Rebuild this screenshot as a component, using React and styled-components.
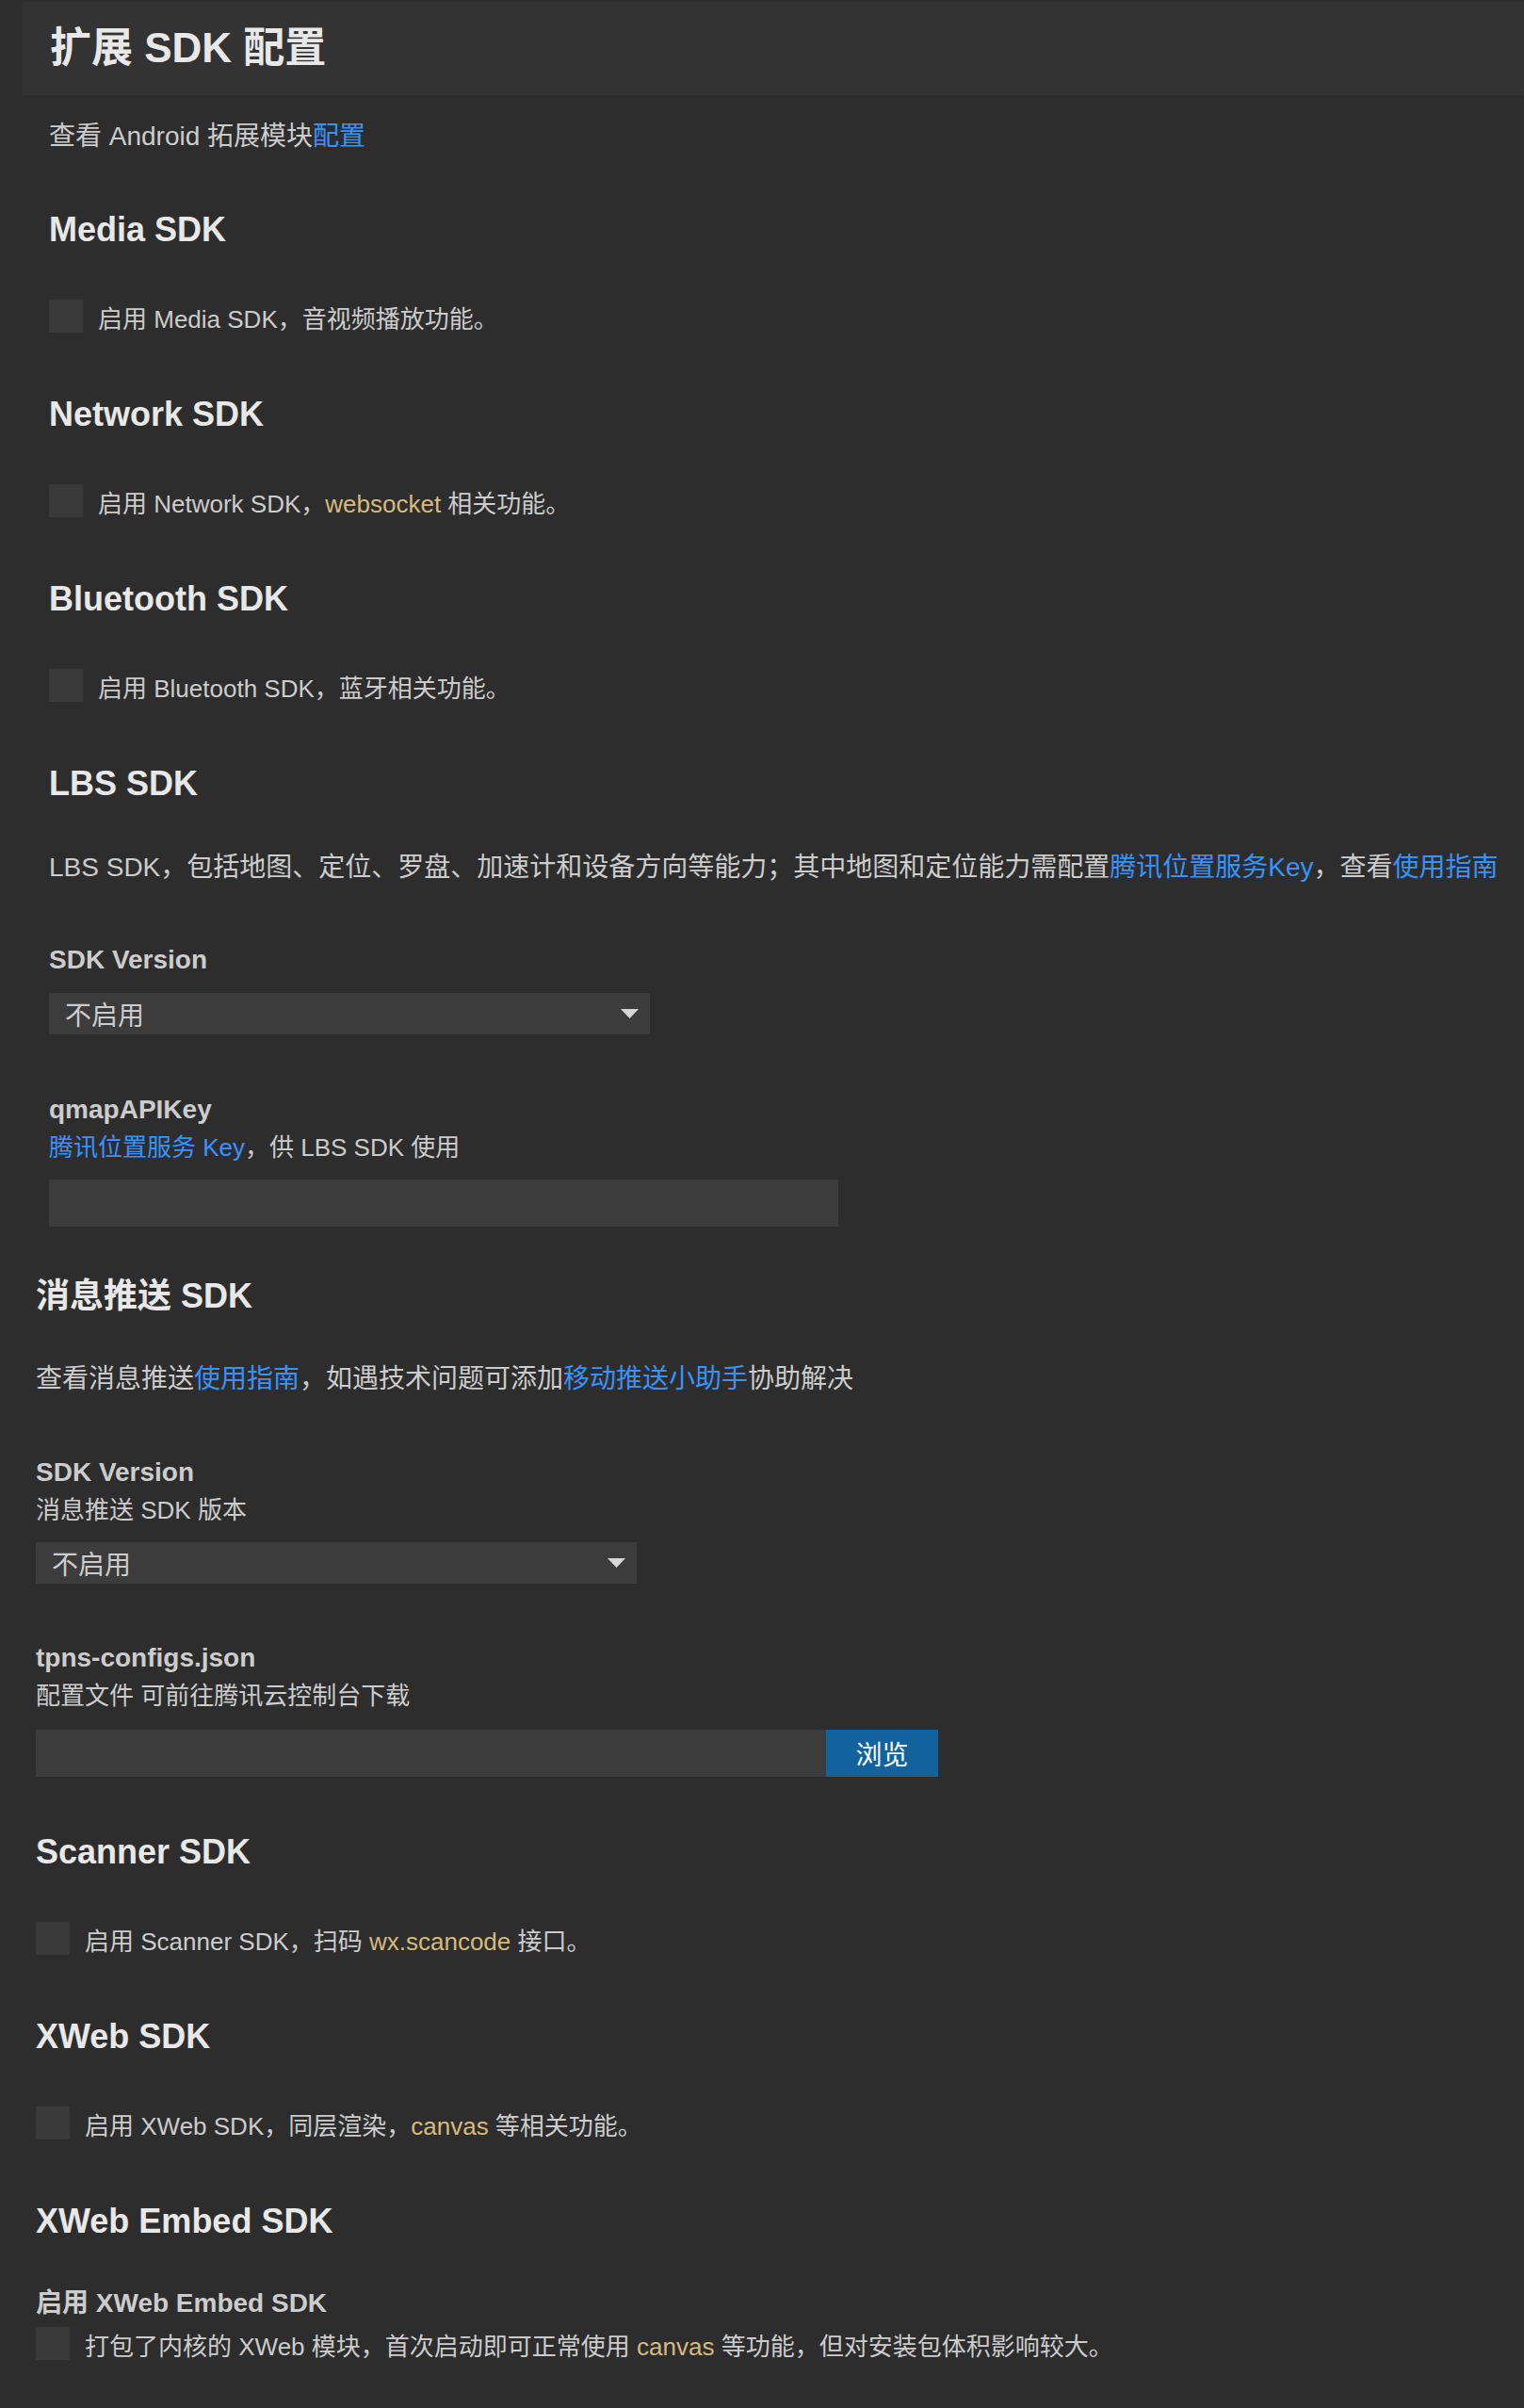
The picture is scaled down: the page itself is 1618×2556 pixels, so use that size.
import React from "react";
import styled, { createGlobalStyle } from "styled-components";

const GlobalStyle = createGlobalStyle`
  html, body {
    margin: 0;
    padding: 0;
    background: #2d2d2d;
  }
  body {
    font-family: "Liberation Sans", "Noto Sans CJK SC", sans-serif;
    color: #cccccc;
  }
  * { box-sizing: border-box; }
`;

const Page = styled.div`
  padding-top: 2px;
  padding-bottom: 46px;
  min-height: 2556px;
`;

const HeaderBand = styled.div`
  margin-left: 24px;
  height: 99px;
  background: #333333;
  padding: 24px 0 0 29px;
`;

const Title = styled.h1`
  margin: 0;
  font-size: 44px;
  line-height: 50px;
  font-weight: 700;
  color: #e8e8e8;
`;

const Group = styled.div`
  padding-left: ${(p) => p.$inset}px;
  padding-right: 20px;
`;

const Para = styled.p`
  margin: ${(p) => p.$mt || 0}px 0 0;
  font-size: 28px;
  line-height: 40px;
  color: #cccccc;
  white-space: nowrap;
`;

const Section = styled.section`
  margin-top: ${(p) => p.$mt ?? 60}px;
`;

const Heading = styled.h2`
  margin: 0;
  font-size: 36px;
  line-height: 44px;
  font-weight: 700;
  color: #e8e8e8;
`;

const CheckRow = styled.label`
  display: flex;
  align-items: flex-start;
  gap: 16px;
  margin-top: ${(p) => p.$mt ?? 52}px;
  height: 40px;
`;

const CheckBox = styled.span`
  flex: none;
  width: 36px;
  height: 35px;
  background: #3a3a3a;
`;

const CheckText = styled.span`
  font-size: 26px;
  line-height: 42px;
  color: #cccccc;
  white-space: nowrap;
`;

const Link = styled.a`
  color: #3794ff;
  text-decoration: none;
`;

const Code = styled.span`
  color: #d7ba7d;
`;

const FieldLabel = styled.div`
  margin-top: ${(p) => p.$mt || 0}px;
  font-size: 28px;
  line-height: 38px;
  font-weight: 700;
  color: #cccccc;
`;

const FieldDesc = styled.div`
  font-size: 26px;
  line-height: 44px;
  margin-top: -1px;
  color: #cccccc;
  white-space: nowrap;
`;

const SelectBox = styled.div`
  margin-top: ${(p) => p.$mt || 16}px;
  width: 638px;
  height: 44px;
  background: #3c3c3c;
  display: flex;
  align-items: center;
  justify-content: space-between;
  padding: 0 12px 0 17px;
  font-size: 28px;
  color: #cccccc;
`;

const TextInput = styled.input`
  display: block;
  margin-top: 12px;
  width: 838px;
  height: 50px;
  border: none;
  outline: none;
  background: #3c3c3c;
  color: #cccccc;
  font-size: 28px;
  padding: 0 12px;
`;

const FileRow = styled.div`
  display: flex;
  margin-top: 14px;
  height: 50px;
  width: 958px;
`;

const FileInput = styled.input`
  flex: 1;
  border: none;
  outline: none;
  background: #3c3c3c;
  color: #cccccc;
  font-size: 28px;
  padding: 0 12px;
`;

const Button = styled.button`
  flex: none;
  width: 119px;
  border: none;
  background: #12639d;
  color: #ffffff;
  font-family: "Liberation Sans", "Noto Sans CJK SC", sans-serif;
  font-size: 28px;
  padding: 0;
`;

const Caret = () => (
  <svg width="19" height="10" viewBox="0 0 19 10">
    <polygon points="0,0 19,0 9.5,10" fill="#d6d6d6" />
  </svg>
);

const Select = ({ mt }) => (
  <SelectBox $mt={mt}>
    <span>不启用</span>
    <Caret />
  </SelectBox>
);

const CheckSection = ({ title, children, mt }) => (
  <Section $mt={mt}>
    <Heading>{title}</Heading>
    <CheckRow>
      <CheckBox />
      <CheckText>{children}</CheckText>
    </CheckRow>
  </Section>
);

export default function App() {
  return (
    <>
      <GlobalStyle />
      <Page>
        <HeaderBand>
          <Title>扩展 SDK 配置</Title>
        </HeaderBand>

        <Group $inset={52}>
          <Para $mt={24}>
            查看 Android 拓展模块<Link>配置</Link>
          </Para>

          <CheckSection title="Media SDK" mt={57}>
            启用 Media SDK，音视频播放功能。
          </CheckSection>

          <CheckSection title="Network SDK">
            启用 Network SDK，<Code>websocket</Code> 相关功能。
          </CheckSection>

          <CheckSection title="Bluetooth SDK">
            启用 Bluetooth SDK，蓝牙相关功能。
          </CheckSection>

          <Section $mt={60}>
            <Heading>LBS SDK</Heading>
            <Para $mt={47}>
              LBS SDK，包括地图、定位、罗盘、加速计和设备方向等能力；其中地图和定位能力需配置
              <Link>腾讯位置服务Key</Link>，查看<Link>使用指南</Link>
            </Para>
            <FieldLabel $mt={59}>SDK Version</FieldLabel>
            <Select mt={16} />
            <FieldLabel $mt={61}>qmapAPIKey</FieldLabel>
            <FieldDesc>
              <Link>腾讯位置服务 Key</Link>，供 LBS SDK 使用
            </FieldDesc>
            <TextInput type="text" />
          </Section>
        </Group>

        <Group $inset={38}>
          <Section $mt={52}>
            <Heading>消息推送 SDK</Heading>
            <Para $mt={46}>
              查看消息推送<Link>使用指南</Link>，如遇技术问题可添加<Link>移动推送小助手</Link>协助解决
            </Para>
            <FieldLabel $mt={60}>SDK Version</FieldLabel>
            <FieldDesc>消息推送 SDK 版本</FieldDesc>
            <Select mt={12} />
            <FieldLabel $mt={60}>tpns-configs.json</FieldLabel>
            <FieldDesc>配置文件 可前往腾讯云控制台下载</FieldDesc>
            <FileRow>
              <FileInput type="text" />
              <Button>浏览</Button>
            </FileRow>
          </Section>

          <CheckSection title="Scanner SDK" mt={58}>
            启用 Scanner SDK，扫码 <Code>wx.scancode</Code> 接口。
          </CheckSection>

          <CheckSection title="XWeb SDK">
            启用 XWeb SDK，同层渲染，<Code>canvas</Code> 等相关功能。
          </CheckSection>

          <Section $mt={60}>
            <Heading>XWeb Embed SDK</Heading>
            <FieldLabel $mt={46}>启用 XWeb Embed SDK</FieldLabel>
            <CheckRow $mt={6}>
              <CheckBox />
              <CheckText>
                打包了内核的 XWeb 模块，首次启动即可正常使用 <Code>canvas</Code> 等功能，但对安装包体积影响较大。
              </CheckText>
            </CheckRow>
          </Section>
        </Group>
      </Page>
    </>
  );
}
